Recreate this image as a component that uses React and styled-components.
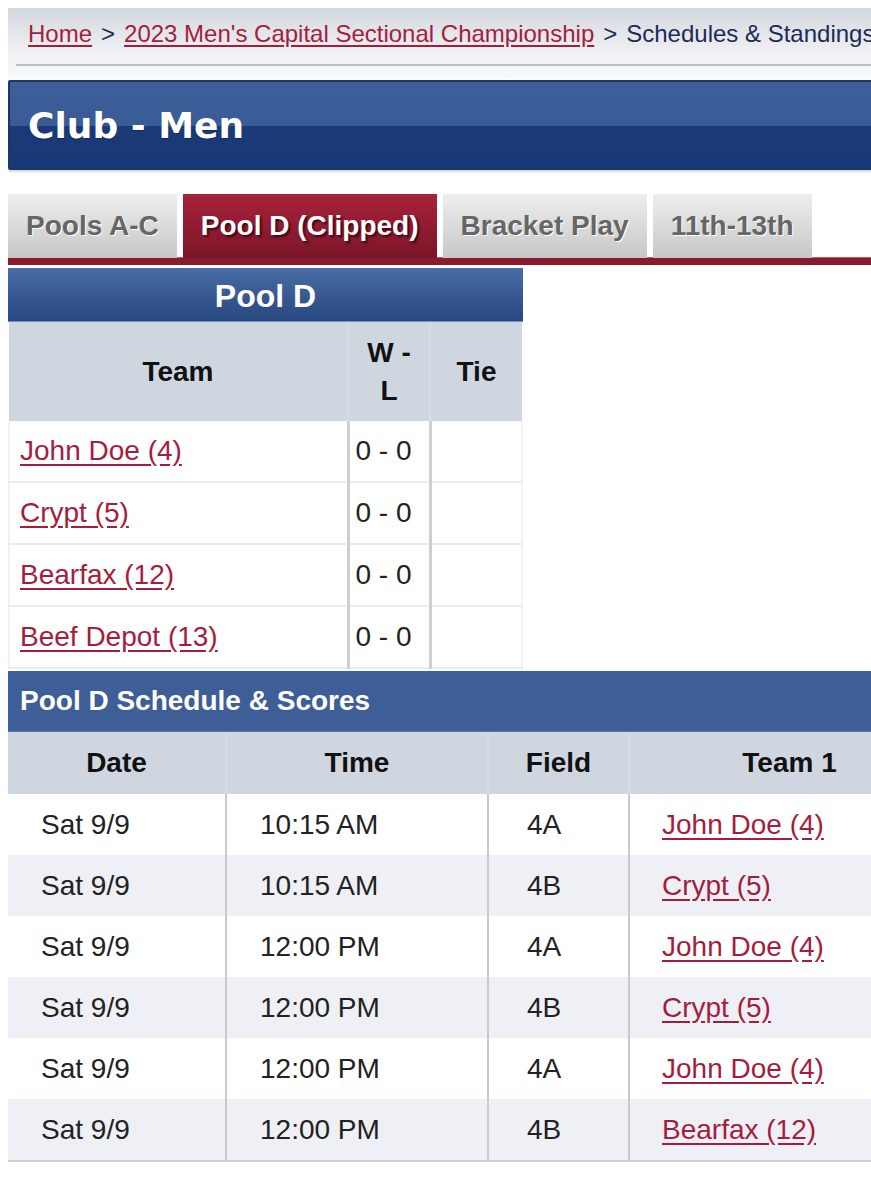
import React from "react";
import styled, { createGlobalStyle } from "styled-components";

const GlobalStyle = createGlobalStyle`
  body {
    margin: 8px 0 8px 8px;
    background: #fff;
    font-family: "Liberation Sans", Arial, sans-serif;
    color: #222;
  }
`;

// the page is wider than the phone screen; it runs to the right edge and is cut there
const Page = styled.div`
  width: 100%;
  overflow: hidden;
`;

const Inner = styled.div`
  width: 941px;
`;

const CrumbBox = styled.div`
  background: linear-gradient(to bottom, #d3d8df 0%, #f2f3f5 70%, #f7f8fa 100%);
  padding: 0 0 12px;
`;

const Crumbs = styled.div`
  margin: 0 8px;
  padding: 12px 12px 0;
  height: 44px;
  border-bottom: 2px solid #bcbfc4;
  font-size: 24px;
  line-height: 28px;
  color: #1c2b55;
  white-space: nowrap;
  a {
    color: #a51d3d;
    text-decoration: underline;
    text-underline-offset: 3px;
  }
  span.sep {
    margin: 0 9px;
  }
`;

const TitleBar = styled.div`
  margin-top: 2px;
  height: 86px;
  border: 2px solid #1f3563;
  border-radius: 2px;
  box-shadow: 0 2px 2px rgba(0, 0, 0, 0.15);
  background: linear-gradient(to bottom, #3c5f99 0%, #3a5c96 51%, #1a3a78 51%, #183775 100%);
  display: flex;
  align-items: center;
  padding-left: 18px;
  h1 {
    margin: 0;
    font-family: "DejaVu Sans", Verdana, sans-serif;
    font-weight: bold;
    font-size: 36px;
    color: #fff;
    text-shadow: 0 1px 1px rgba(0, 0, 0, 0.3);
  }
`;

const TabRow = styled.div`
  margin-top: 24px;
  display: flex;
  gap: 6px;
  border-bottom: 7px solid #8a1b2f;
  box-shadow: inset 0 -8px 0 -7px #c65a6b;
`;

const Tab = styled.div`
  height: 64px;
  padding: 0 18px;
  display: flex;
  align-items: center;
  font-size: 28px;
  font-weight: bold;
  white-space: nowrap;
  color: ${(p) => (p.$active ? "#fff" : "#666")};
  text-shadow: ${(p) =>
    p.$active ? "2px 2px 2px #3d0911" : "1px 1px 0 #fff"};
  background: ${(p) =>
    p.$active
      ? "linear-gradient(to bottom, #a8223b 0%, #7b1528 100%)"
      : "linear-gradient(to bottom, #eeeeee 0%, #c7c7c7 100%)"};
`;

const PoolTable = styled.table`
  margin-top: 3px;
  width: 513px;
  border-collapse: collapse;
  table-layout: fixed;
`;

const PoolCaption = styled.caption`
  height: 53px;
  background: linear-gradient(to bottom, #4a6ca4 0%, #274781 100%);
  border-bottom: 1px solid #7a92ba;
  color: #fff;
  font-weight: bold;
  font-size: 32px;
  line-height: 56px;
  text-align: center;
`;

const HeadCell = styled.th`
  background: #cfd6e0;
  color: #111;
  font-weight: bold;
  font-size: 28px;
  line-height: 38px;
  height: ${(p) => p.$h}px;
  padding: 0 9px;
  text-align: center;
  border-left: 2px solid #d6dce5;
  &:first-child {
    border-left: none;
  }
`;

const Cell = styled.td`
  height: 60px;
  font-size: 28px;
  padding: 0 ${(p) => p.$pad}px;
  text-align: left;
  white-space: nowrap;
  border-left: 3px solid #cfcfd2;
  border-bottom: 2px solid #ececef;
  &:first-child {
    border-left: 2px solid #f1f1f3;
  }
  &:last-child {
    border-right: 2px solid #f1f1f3;
  }
  a {
    color: #a51d3d;
    text-decoration: underline;
    text-underline-offset: 4px;
  }
`;

const ScheduleBar = styled.div`
  margin-top: 2px;
  height: 60px;
  background: #3d5e96;
  border-bottom: 1px solid #5a76a6;
  color: #fff;
  font-weight: bold;
  font-size: 28px;
  line-height: 60px;
  padding-left: 12px;
`;

const ScheduleTable = styled.table`
  width: 941px;
  border-collapse: collapse;
  table-layout: fixed;
  border-bottom: 2px solid #cfd0d4;
`;

const SRow = styled.tr`
  background: ${(p) => (p.$alt ? "#eef0f5" : "#fff")};
`;

const SCell = styled.td`
  height: 61px;
  font-size: 28px;
  color: #222;
  padding: 0 0 0 ${(p) => p.$pad}px;
  white-space: nowrap;
  border-left: 2px solid #c9cacf;
  &:first-child {
    border-left: none;
  }
  a {
    color: #a51d3d;
    text-decoration: underline;
    text-underline-offset: 4px;
  }
`;

const standings = [
  { team: "John Doe (4)", wl: "0 - 0" },
  { team: "Crypt (5)", wl: "0 - 0" },
  { team: "Bearfax (12)", wl: "0 - 0" },
  { team: "Beef Depot (13)", wl: "0 - 0" },
];

const games = [
  { time: "10:15 AM", field: "4A", team: "John Doe (4)" },
  { time: "10:15 AM", field: "4B", team: "Crypt (5)" },
  { time: "12:00 PM", field: "4A", team: "John Doe (4)" },
  { time: "12:00 PM", field: "4B", team: "Crypt (5)" },
  { time: "12:00 PM", field: "4A", team: "John Doe (4)" },
  { time: "12:00 PM", field: "4B", team: "Bearfax (12)" },
];

const tabs = [
  { label: "Pools A-C" },
  { label: "Pool D (Clipped)", active: true },
  { label: "Bracket Play" },
  { label: "11th-13th" },
];

export default function App() {
  return (
    <Page>
      <GlobalStyle />
      <Inner>
        <CrumbBox>
          <Crumbs>
            <a href="#home">Home</a>
            <span className="sep">&gt;</span>
            <a href="#event">2023 Men's Capital Sectional Championship</a>
            <span className="sep">&gt;</span>
            Schedules &amp; Standings
          </Crumbs>
        </CrumbBox>

        <TitleBar>
          <h1>Club - Men</h1>
        </TitleBar>

        <TabRow>
          {tabs.map((t) => (
            <Tab key={t.label} $active={t.active}>
              {t.label}
            </Tab>
          ))}
        </TabRow>

        <PoolTable>
          <PoolCaption>Pool D</PoolCaption>
          <colgroup>
            <col style={{ width: 339 }} />
            <col style={{ width: 82 }} />
            <col style={{ width: 92 }} />
          </colgroup>
          <thead>
            <tr>
              <HeadCell $h={99}>Team</HeadCell>
              <HeadCell $h={99}>W - L</HeadCell>
              <HeadCell $h={99}>Tie</HeadCell>
            </tr>
          </thead>
          <tbody>
            {standings.map((s) => (
              <tr key={s.team}>
                <Cell $pad={10}>
                  <a href="#team">{s.team}</a>
                </Cell>
                <Cell $pad={6}>{s.wl}</Cell>
                <Cell $pad={6}></Cell>
              </tr>
            ))}
          </tbody>
        </PoolTable>

        <ScheduleBar>Pool D Schedule &amp; Scores</ScheduleBar>
        <ScheduleTable>
          <colgroup>
            <col style={{ width: 218 }} />
            <col style={{ width: 262 }} />
            <col style={{ width: 141 }} />
            <col style={{ width: 320 }} />
          </colgroup>
          <thead>
            <tr>
              <HeadCell $h={62}>Date</HeadCell>
              <HeadCell $h={62}>Time</HeadCell>
              <HeadCell $h={62}>Field</HeadCell>
              <HeadCell $h={62}>Team 1</HeadCell>
            </tr>
          </thead>
          <tbody>
            {games.map((g, i) => (
              <SRow key={i} $alt={i % 2 === 1}>
                <SCell $pad={33}>Sat 9/9</SCell>
                <SCell $pad={33}>{g.time}</SCell>
                <SCell $pad={38}>{g.field}</SCell>
                <SCell $pad={32}>
                  <a href="#team">{g.team}</a>
                </SCell>
              </SRow>
            ))}
          </tbody>
        </ScheduleTable>
      </Inner>
    </Page>
  );
}
